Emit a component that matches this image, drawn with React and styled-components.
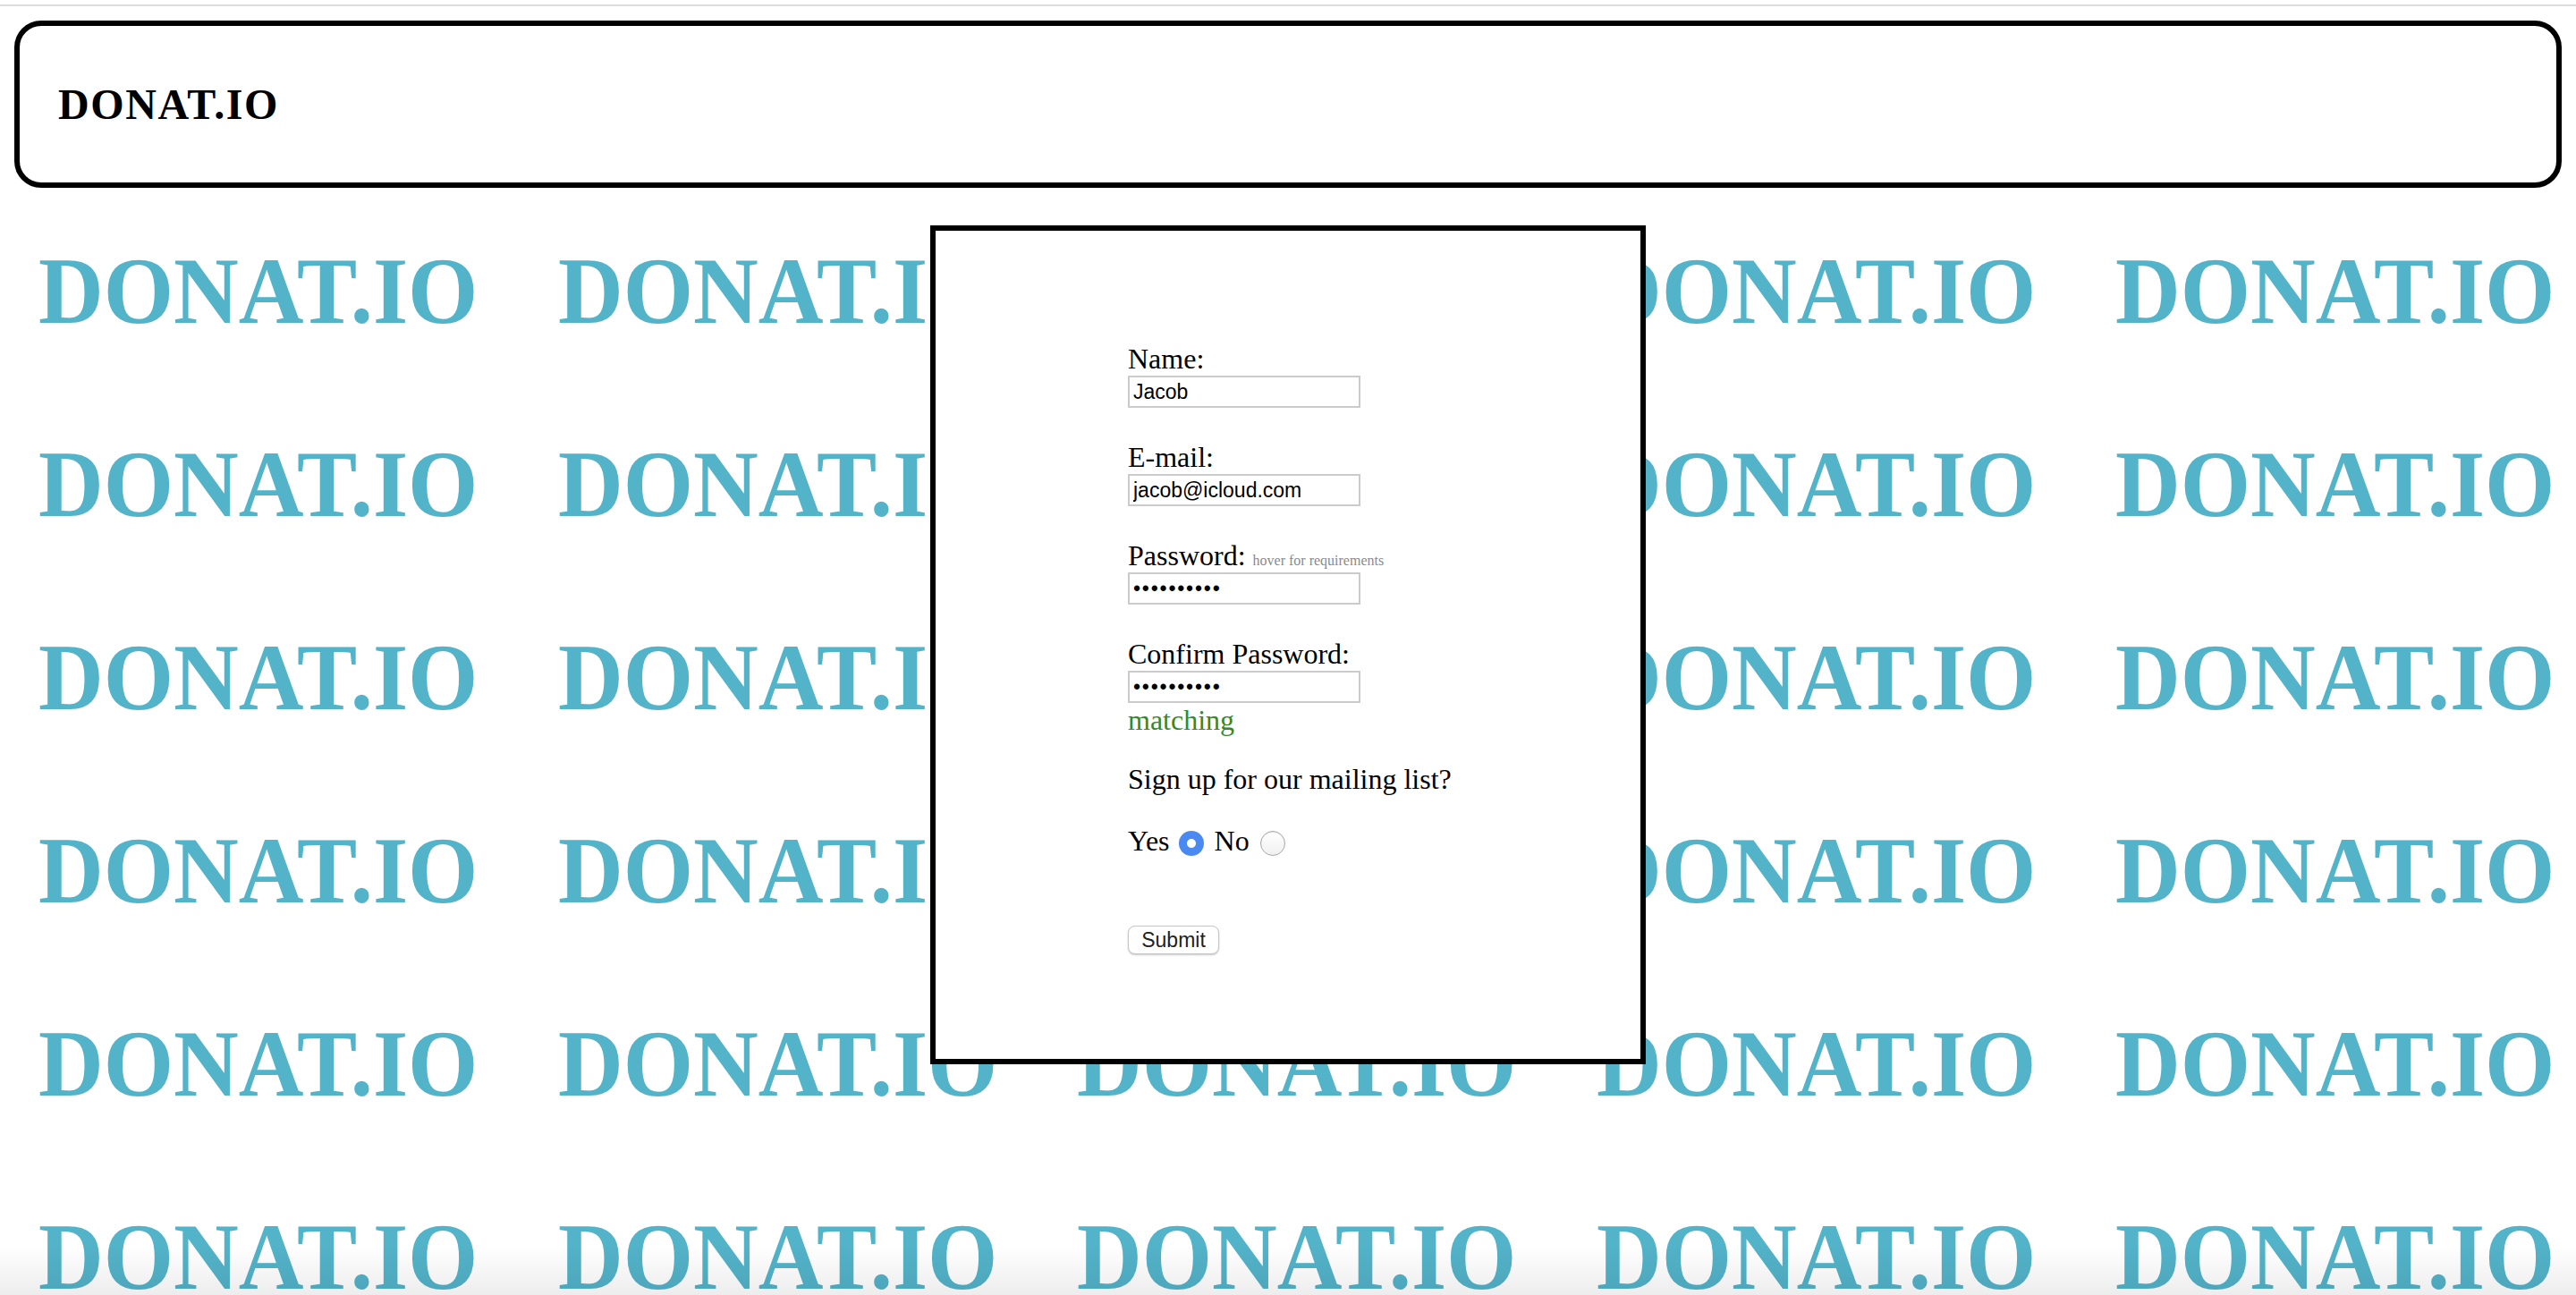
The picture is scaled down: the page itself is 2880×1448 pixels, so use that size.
import React from "react";
import styled, { createGlobalStyle } from "styled-components";

const GlobalStyle = createGlobalStyle`
  html, body { margin: 0; padding: 0; background: #fff; overflow: hidden; }
  body { font-family: "Liberation Serif", "Times New Roman", serif; color: #000; }
  #root { height: 1448px; display: flex; flex-direction: column; }
`;

const TopRule = styled.div`
  flex: none;
  height: 2px;
  margin-top: 5px;
  background: #dcdcdf;
`;

const HeaderWrap = styled.div`
  flex: none;
  padding: 16px 16px 0;
`;

const Header = styled.header`
  height: 187px;
  box-sizing: border-box;
  border: 6px solid #000;
  border-radius: 30px;
  background: #fff;
  display: flex;
  align-items: center;
  padding-left: 43px;
`;

const Brand = styled.h2`
  margin: 0;
  font: bold 48px/normal "Liberation Serif", "Times New Roman", serif;
  letter-spacing: 1.6px;
`;

const Stage = styled.main`
  flex: 1;
  min-height: 0;
  display: grid;
  grid-template-columns: minmax(0, 1fr);
  grid-template-rows: minmax(0, 1fr);
  overflow: hidden;
`;

const TileLayer = styled.div`
  grid-area: 1 / 1;
  min-width: 0;
  overflow: hidden;
  display: grid;
  grid-template-columns: repeat(5, 580.5px);
  grid-auto-rows: 216px;
  align-content: start;
  padding: 63px 0 0 43px;
`;

const Tile = styled.div`
  font: bold 106px/1 "Liberation Serif", "Times New Roman", serif;
  color: #53b3c9;
  white-space: nowrap;
  transform: scaleX(0.95);
  transform-origin: 0 0;
`;

const Card = styled.section`
  grid-area: 1 / 1;
  z-index: 1;
  justify-self: center;
  align-self: start;
  margin-top: 42px;
  width: 800px;
  height: 938px;
  box-sizing: border-box;
  border: 6px solid #000;
  background: #fff;
  padding: 124px 0 0 215px;
`;

const Field = styled.div`
  margin-bottom: ${(p) => p.$gap}px;
`;

const Label = styled.label`
  display: block;
  font-size: 32px;
  line-height: 38px;
`;

const Hint = styled.span`
  font-size: 16px;
  line-height: 1;
  color: #8a8a8a;
`;

const TextInput = styled.input`
  display: block;
  box-sizing: border-box;
  width: 260px;
  height: 36px;
  margin: 0;
  padding: 0 0 0 4px;
  border: 2px solid #cbcbcb;
  border-radius: 0;
  background: #fff;
  color: #000;
  font: 23px "Liberation Sans", Arial, sans-serif;
  letter-spacing: ${(p) => (p.type === "password" ? "1.8px" : "0")};
  outline: none;
`;

const Status = styled.div`
  font-size: 32px;
  line-height: 38px;
  color: #338a26;
`;

const Question = styled.p`
  margin: 0 0 31px;
  font-size: 32px;
  line-height: 38px;
`;

const RadioRow = styled.div`
  display: flex;
  align-items: center;
  height: 38px;
  font-size: 32px;
  line-height: 38px;
`;

const Choice = styled.label`
  margin-left: ${(p) => p.$offset}px;
`;

const Radio = styled.input`
  appearance: none;
  -webkit-appearance: none;
  box-sizing: border-box;
  width: 28px;
  height: 28px;
  margin: 5px 0 0 ${(p) => p.$offset}px;
  border-radius: 50%;
  border: 1.5px solid #a8a8a8;
  background: linear-gradient(#ffffff, #f0f0f0);
  box-shadow: inset 0 1px 1px rgba(0, 0, 0, 0.1);

  &:checked {
    border: none;
    box-shadow: none;
    background: radial-gradient(circle, #ffffff 0 4.5px, #4a88f2 5.5px);
  }
`;

const SubmitButton = styled.button`
  display: block;
  box-sizing: border-box;
  width: 102px;
  height: 32px;
  margin-top: 76px;
  padding: 0;
  border: 1.5px solid #c6c6c6;
  border-radius: 8px;
  background: #fff;
  box-shadow: 0 1px 2px rgba(0, 0, 0, 0.22);
  color: #222;
  font: 23px/1 "Liberation Sans", Arial, sans-serif;
`;

const WindowShade = styled.div`
  position: fixed;
  left: 0;
  right: 0;
  bottom: 0;
  height: 56px;
  pointer-events: none;
  background: linear-gradient(rgba(0, 0, 0, 0), rgba(0, 0, 0, 0.07));
`;

const tiles = Array.from({ length: 35 }, (_, i) => i);

export default function App() {
  return (
    <>
      <GlobalStyle />
      <TopRule />
      <HeaderWrap>
        <Header>
          <Brand>DONAT.IO</Brand>
        </Header>
      </HeaderWrap>
      <Stage>
        <TileLayer aria-hidden="true">
          {tiles.map((i) => (
            <Tile key={i}>DONAT.IO</Tile>
          ))}
        </TileLayer>
        <Card>
          <form onSubmit={(e) => e.preventDefault()}>
            <Field $gap={36}>
              <Label htmlFor="name">Name:</Label>
              <TextInput id="name" type="text" defaultValue="Jacob" />
            </Field>
            <Field $gap={36}>
              <Label htmlFor="email">E-mail:</Label>
              <TextInput id="email" type="email" defaultValue="jacob@icloud.com" />
            </Field>
            <Field $gap={36}>
              <Label htmlFor="pw">
                Password: <Hint title="at least 8 characters">hover for requirements</Hint>
              </Label>
              <TextInput id="pw" type="password" defaultValue="jacob12345" />
            </Field>
            <Field $gap={28}>
              <Label htmlFor="pw2">Confirm Password:</Label>
              <TextInput id="pw2" type="password" defaultValue="jacob12345" />
              <Status>matching</Status>
            </Field>
            <Question>Sign up for our mailing list?</Question>
            <RadioRow>
              <Choice htmlFor="yes" $offset={0}>Yes</Choice>
              <Radio id="yes" type="radio" name="mail" defaultChecked $offset={10} />
              <Choice htmlFor="no" $offset={12}>No</Choice>
              <Radio id="no" type="radio" name="mail" $offset={12} />
            </RadioRow>
            <SubmitButton type="submit">Submit</SubmitButton>
          </form>
        </Card>
      </Stage>
      <WindowShade />
    </>
  );
}
